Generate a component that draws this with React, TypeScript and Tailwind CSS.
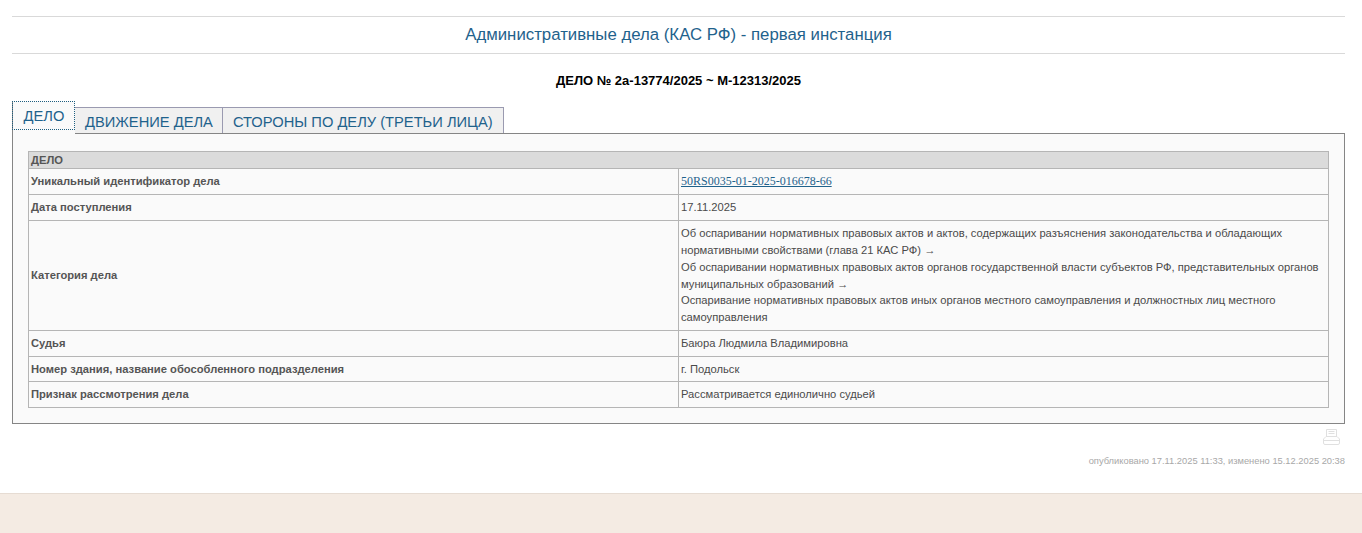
const rows: { label: string; value: React.ReactNode; h: string }[] = [
  {
    label: "Уникальный идентификатор дела",
    value: (
      <a href="#" className="font-['Liberation_Serif',serif] text-[12px] text-[#1f628c] underline">
        50RS0035-01-2025-016678-66
      </a>
    ),
    h: "h-[26px]",
  },
  { label: "Дата поступления", value: "17.11.2025", h: "h-[26px]" },
  {
    label: "Категория дела",
    value: (
      <>
        Об оспаривании нормативных правовых актов и актов, содержащих разъяснения законодательства и обладающих
        нормативными свойствами (глава 21 КАС РФ) →
        <br />
        Об оспаривании нормативных правовых актов органов государственной власти субъектов РФ, представительных органов
        муниципальных образований →
        <br />
        Оспаривание нормативных правовых актов иных органов местного самоуправления и должностных лиц местного
        самоуправления
      </>
    ),
    h: "h-[110px]",
  },
  { label: "Судья", value: "Баюра Людмила Владимировна", h: "h-[26px]" },
  { label: "Номер здания, название обособленного подразделения", value: "г. Подольск", h: "h-[25px]" },
  { label: "Признак рассмотрения дела", value: "Рассматривается единолично судьей", h: "h-[26px]" },
];

function PrinterIcon() {
  return (
    <svg width="17" height="18" viewBox="0 0 17 18" fill="none" stroke="#e0e0e0" strokeWidth="1">
      <path d="M3.5 8.5V1.5h10v7" />
      <path d="M5.5 3.5h6M5.5 5.5h6" />
      <path d="M3 8.5h11l2.5 2.5v4a1.5 1.5 0 0 1-1.5 1.5H2A1.5 1.5 0 0 1 .5 15v-4z" />
      <path d="M.5 12.5h16" />
    </svg>
  );
}

export default function App() {
  return (
    <div className="flex min-h-[533px] flex-col bg-white font-['Liberation_Sans',Arial,sans-serif]">
      <div className="h-[493px] pt-4 pr-[17px] pl-3">
        <h1 className="h-[38px] border-y border-[#d9d9d9] text-center text-[16.8px] leading-[35px] font-normal text-[#1f628c]">
          Административные дела (КАС РФ) - первая инстанция
        </h1>
        <h2 className="mt-[17px] text-center text-[13px] leading-[20px] font-bold text-black">
          ДЕЛО № 2а-13774/2025 ~ М-12313/2025
        </h2>

        <div className="mt-[10px] flex h-[32px] items-end">
          <div className="relative z-10 -mb-px h-[33px] w-[63px] border-l border-[#858585] bg-[#fafafa] text-center text-[14.7px] leading-[31px] text-[#1f628c]">
            ДЕЛО
            <div className="absolute top-0 right-0 -left-px h-[29px] border border-dotted border-[#1f5f80]" />
          </div>
          <div className="h-[26px] border border-b-0 border-l-0 border-[#9a9ab0] bg-[#f0f0f0] pr-[9px] pl-[10px] text-[14.7px] leading-[29px] text-[#1f628c]">
            ДВИЖЕНИЕ ДЕЛА
          </div>
          <div className="h-[26px] border border-b-0 border-l-0 border-[#9a9ab0] bg-[#f0f0f0] px-[10px] text-[14.7px] leading-[29px] text-[#1f628c]">
            СТОРОНЫ ПО ДЕЛУ (ТРЕТЬИ ЛИЦА)
          </div>
        </div>

        <div className="h-[291px] border border-[#858585] bg-[#fafafa] px-[15px] pt-[17px]">
          <table className="w-full table-fixed border-collapse text-[11.2px] text-[#4a4a4a]">
            <colgroup>
              <col className="w-[650px]" />
              <col />
            </colgroup>
            <tbody>
              <tr className="h-[17px]">
                <td colSpan={2} className="border border-[#b5b5b5] bg-[#dbdbdb] px-[2px] py-0 leading-[16px] font-bold text-[#555]">
                  ДЕЛО
                </td>
              </tr>
              {rows.map((row) => (
                <tr key={row.label} className={row.h}>
                  <td className="border border-[#b5b5b5] px-[2px] py-0 font-bold text-[#555]">{row.label}</td>
                  <td className="border border-[#b5b5b5] px-[2px] py-0 leading-[16.8px]">{row.value}</td>
                </tr>
              ))}
            </tbody>
          </table>
        </div>

        <div className="mt-1 flex justify-end pr-[5px]">
          <PrinterIcon />
        </div>
        <p className="mt-[8px] text-right text-[9.33px] leading-[14px] text-[#a8a8a8]">
          опубликовано 17.11.2025 11:33, изменено 15.12.2025 20:38
        </p>
      </div>
      <div className="h-[40px] border-t border-[#e6dcd3] bg-[#f4ebe3]" />
    </div>
  );
}
